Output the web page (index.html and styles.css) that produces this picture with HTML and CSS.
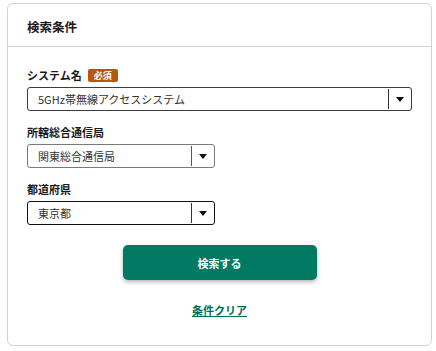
FILE: index.html
```html
<!DOCTYPE html>
<html lang="ja">
<head>
<meta charset="utf-8">
<link rel="stylesheet" href="styles.css">
</head>
<body>
<section class="card">
  <header class="card-head">検索条件</header>
  <div class="card-body">
    <div class="label">システム名<span class="badge">必須</span></div>
    <div class="select select-wide select-dark">
      <span class="select-value">5GHz帯無線アクセスシステム</span>
      <span class="select-arrow"><span class="tri"></span></span>
    </div>

    <div class="label label-gap">所轄総合通信局</div>
    <div class="select select-narrow select-gray">
      <span class="select-value">関東総合通信局</span>
      <span class="select-arrow"><span class="tri"></span></span>
    </div>

    <div class="label label-gap">都道府県</div>
    <div class="select select-narrow select-black">
      <span class="select-value">東京都</span>
      <span class="select-arrow"><span class="tri"></span></span>
    </div>

    <div class="actions">
      <button class="btn-primary" type="button">検索する</button>
      <a class="link-clear" href="#">条件クリア</a>
    </div>
  </div>
</section>
</body>
</html>
```

FILE: styles.css
```css
html, body {
  margin: 0;
  padding: 0;
  background: #ffffff;
}
body {
  padding: 3px 4px 0 7px;
  font-family: "Noto Sans CJK JP", "Noto Sans", sans-serif;
  color: #222222;
}
.card {
  box-sizing: border-box;
  width: 425px;
  height: 343px;
  border: 1px solid #d2d2d2;
  border-radius: 6px;
  background: #fff;
}
.card-head {
  box-sizing: border-box;
  height: 43px;
  padding: 14px 19px 0;
  font-size: 12.5px;
  line-height: 18px;
  font-weight: 700;
  color: #1a1a1a;
  border-bottom: 1px solid #d2d2d2;
}
.card-body {
  display: flex;
  flex-direction: column;
  align-items: flex-start;
  padding: 20px 19px 0;
}
.label {
  display: flex;
  align-items: center;
  height: 16px;
  font-size: 11px;
  line-height: 16px;
  font-weight: 700;
  color: #1a1a1a;
  margin-bottom: 4px;
}
.label-gap {
  margin-top: 13px;
}
.badge {
  display: inline-flex;
  align-items: center;
  justify-content: center;
  margin-left: 6px;
  width: 30px;
  height: 13px;
  border-radius: 2px;
  background: #b5570f;
  color: #fff;
  font-size: 9px;
  line-height: 13px;
  font-weight: 700;
}
.select {
  box-sizing: border-box;
  display: flex;
  align-items: stretch;
  height: 24px;
  border: 1px solid #444;
  border-radius: 3px;
  background: #fff;
}
.select-wide { width: 385px; }
.select-narrow { width: 188px; }
.select-dark { border-color: #3c3c3c; }
.select-gray { border-color: #7a7a7a; }
.select-black { border-color: #111; }
.select-value {
  flex: 1;
  padding-left: 10px;
  font-size: 11px;
  line-height: 22px;
  color: #333;
}
.select-arrow {
  width: 22px;
  display: flex;
  align-items: center;
  justify-content: center;
  border-left: 1px solid #333;
  margin: 1px 0;
}
.select-gray .select-arrow { border-left-color: #555; }
.tri {
  width: 0;
  height: 0;
  border-left: 4px solid transparent;
  border-right: 4px solid transparent;
  border-top: 5px solid #111;
}
.actions {
  align-self: stretch;
  display: flex;
  flex-direction: column;
  align-items: center;
  margin-top: 20px;
}
.btn-primary {
  width: 194px;
  height: 35px;
  border: none;
  border-radius: 5px;
  background: #007a62;
  color: #fff;
  font-family: inherit;
  font-size: 11px;
  font-weight: 700;
  box-shadow: 0 2px 4px rgba(0,0,0,0.3);
  padding: 0;
}
.link-clear {
  margin-top: 22px;
  font-size: 11px;
  line-height: 16px;
  font-weight: 700;
  color: #006f59;
  text-decoration: underline;
}
```
